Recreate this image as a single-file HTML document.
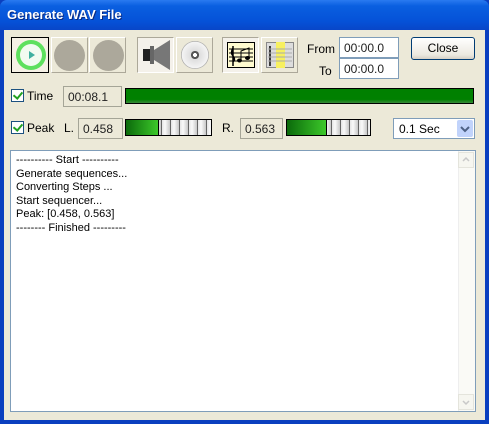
<!DOCTYPE html><html><head><style>
*{margin:0;padding:0;box-sizing:border-box}
body{width:489px;height:424px;overflow:hidden;background:#0a3fbf;font-family:"Liberation Sans",sans-serif;font-size:11px;position:relative}
.a{position:absolute}
#tb{left:0;top:0;width:489px;height:30px;background:linear-gradient(#2a7af0,#0a5fe0 20%,#0552d8 70%,#0846c8);border-radius:7px 7px 0 0}
#tt{left:7px;top:7px;color:#fff;font-weight:bold;font-size:13px;text-shadow:1px 1px #0a2a80}
#bd{left:4px;top:30px;width:481px;height:390px;background:#ece9d8}
.btn{background:#ece9d8;border:1px solid;border-color:#fff #aca899 #aca899 #fff}
.circ{border-radius:50%;background:#aca89b}
.tx{background:#ece9d8;border:1px solid #a5a597;padding:3px 4px;font-size:12px;color:#222}
.in{background:#fff;border:1px solid #7f9db9;padding:3px 4px;font-size:12px;color:#222}
.cb{width:13px;height:13px;border:1px solid #1c5180;background:#fff}
.cb:after{content:"";position:absolute;left:3px;top:0px;width:4px;height:7px;border:solid #21a121;border-width:0 2px 2px 0;transform:rotate(40deg)}
.lbl{font-size:12px;color:#000}
.meter{border:1px solid #000;height:17px;background:repeating-linear-gradient(90deg,#e4e4e4 0,#fafafa 3px,#c8c8c8 8px,#666 8px,#666 9px)}
.mg{position:absolute;left:0;top:0;bottom:0;background:linear-gradient(90deg,#0b6a0b,#3cc82a);border-right:1px solid #000}
</style></head><body>
<div id="tb" class="a"></div><div id="tt" class="a">Generate WAV File</div>
<div id="bd" class="a"></div>
<div class="a" style="left:11px;top:37px;width:38px;height:36px;border:1px solid #000;background:#f5f0e5"></div>
<div class="a circ" style="left:16px;top:40px;width:30px;height:30px;background:#5ee05e"></div>
<div class="a circ" style="left:20px;top:44px;width:22px;height:22px;background:#f2fbf0"></div>
<div class="a" style="left:29px;top:51px;width:0;height:0;border-left:6px solid #40b0a0;border-top:4px solid transparent;border-bottom:4px solid transparent"></div>
<div class="a btn" style="left:51px;top:37px;width:37px;height:36px"></div>
<div class="a circ" style="left:54px;top:40px;width:31px;height:31px"></div>
<div class="a btn" style="left:89px;top:37px;width:37px;height:36px"></div>
<div class="a circ" style="left:93px;top:40px;width:31px;height:31px"></div>
<div class="a" style="left:137px;top:37px;width:37px;height:36px;background:#f4f1ea;border:1px solid;border-color:#aca899 #fff #fff #aca899"></div>
<div class="a" style="left:143px;top:49px;width:7px;height:12px;background:#222"></div>
<div class="a" style="left:150px;top:46px;width:4px;height:18px;background:#666"></div>
<div class="a" style="left:154px;top:40px;width:0;height:30px;border-right:16px solid #777;border-top:10px solid transparent;border-bottom:10px solid transparent"></div>
<div class="a btn" style="left:176px;top:37px;width:37px;height:36px"></div>
<div class="a circ" style="left:181px;top:41px;width:28px;height:28px;background:radial-gradient(#fff 0 2px,#555 2px 4px,#ddd 4px,#f4f4f4 13px,#888 14px)"></div>
<div class="a" style="left:222px;top:37px;width:37px;height:36px;background:#f4f1ea;border:1px solid;border-color:#aca899 #fff #fff #aca899"></div>
<svg class="a" style="left:227px;top:42px" width="28" height="26"><rect x="0.5" y="0.5" width="27" height="25" fill="#fffbd0" stroke="#000"/><g stroke="#000" fill="none"><path d="M2 7h24M2 11h24M2 15h24M2 19h24"/><path d="M6 4v20M6 6q-3 5 0 8q3 3 0 6" stroke-width="1.5"/><path d="M14 18v-9l8-3v10"/></g><ellipse cx="12.5" cy="18.5" rx="2.5" ry="2" fill="#000"/><ellipse cx="20.5" cy="16" rx="2.5" ry="2" fill="#000"/></svg>
<div class="a btn" style="left:261px;top:37px;width:37px;height:36px"></div>
<svg class="a" style="left:266px;top:42px" width="28" height="26"><rect x="0.5" y="0.5" width="27" height="25" fill="#ddd" stroke="#888"/><rect x="10" y="0" width="9" height="26" fill="#f7f060"/><path d="M4 4v20" stroke="#000" stroke-width="1.5"/><path d="M2 7h24M2 11h24M2 15h24M2 19h24" stroke="#aaa"/></svg>
<div class="a lbl" style="left:307px;top:42px">From</div>
<div class="a lbl" style="left:319px;top:64px">To</div>
<div class="a in" style="left:339px;top:37px;width:60px;height:21px">00:00.0</div>
<div class="a in" style="left:339px;top:58px;width:60px;height:21px">00:00.0</div>
<div class="a" style="left:411px;top:37px;width:64px;height:23px;border:1px solid #003c74;border-radius:3px;background:linear-gradient(#fff,#ece9e0 80%,#d6d0c5);text-align:center;line-height:21px;font-size:12px">Close</div>
<div class="a cb" style="left:11px;top:89px"></div>
<div class="a lbl" style="left:27px;top:89px">Time</div>
<div class="a tx" style="left:63px;top:86px;width:59px;height:21px">00:08.1</div>
<div class="a" style="left:125px;top:88px;width:349px;height:16px;border:1px solid #000;background:linear-gradient(#008000 75%,#3a8a3a)"></div>
<div class="a cb" style="left:11px;top:121px"></div>
<div class="a lbl" style="left:27px;top:121px">Peak</div>
<div class="a lbl" style="left:64px;top:121px">L.</div>
<div class="a tx" style="left:78px;top:118px;width:45px;height:21px">0.458</div>
<div class="a meter" style="left:125px;top:119px;width:87px"><div class="mg" style="width:33px"></div></div>
<div class="a lbl" style="left:222px;top:121px">R.</div>
<div class="a tx" style="left:240px;top:118px;width:43px;height:21px">0.563</div>
<div class="a meter" style="left:286px;top:119px;width:85px"><div class="mg" style="width:40px"></div></div>
<div class="a" style="left:393px;top:118px;width:82px;height:21px;background:#fff;border:1px solid #7f9db9;font-size:12px;padding:3px 5px">0.1 Sec</div>
<svg class="a" style="left:457px;top:120px" width="16" height="17"><rect width="16" height="17" rx="2" fill="#c1d3fb"/><path d="M4 7l4 4 4-4" stroke="#4d6185" stroke-width="2" fill="none"/></svg>
<div class="a" style="left:10px;top:150px;width:466px;height:262px;background:#fff;border:1px solid #7f9db9"></div>
<div class="a" style="left:458px;top:151px;width:17px;height:260px;background:#fafaf6;border-left:1px solid #eee"></div>
<svg class="a" style="left:458px;top:152px" width="16" height="16"><rect x="0.5" y="0.5" width="15" height="15" fill="#f6f6f0" stroke="#e4e4dc"/><path d="M5 9l3-3 3 3" stroke="#c8c8c8" stroke-width="1.5" fill="none"/></svg>
<svg class="a" style="left:458px;top:394px" width="16" height="16"><rect x="0.5" y="0.5" width="15" height="15" fill="#f6f6f0" stroke="#e4e4dc"/><path d="M5 7l3 3 3-3" stroke="#c8c8c8" stroke-width="1.5" fill="none"/></svg>
<div class="a" style="left:16px;top:154px;font-size:11px;line-height:13.5px;color:#000">---------- Start ----------<br>Generate sequences...<br>Converting Steps ...<br>Start sequencer...<br>Peak: [0.458, 0.563]<br>-------- Finished ---------</div>
</body></html>
